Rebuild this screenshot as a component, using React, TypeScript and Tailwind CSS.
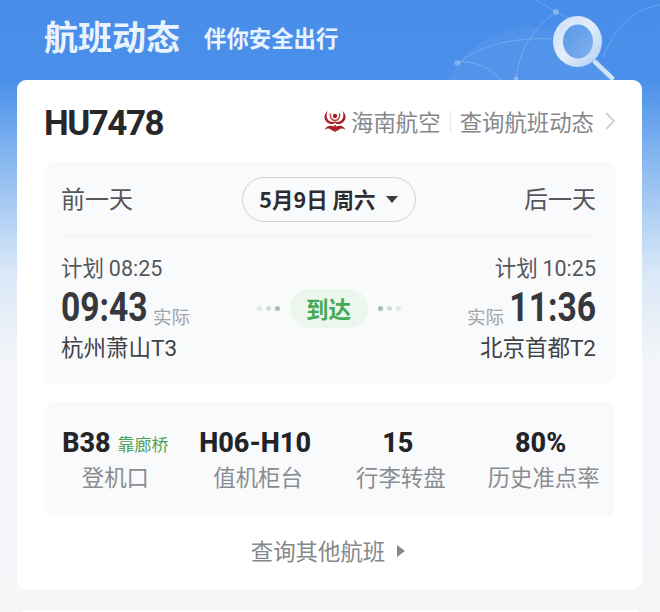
import React from "react";

const cjk = { fontFamily: '"Noto Sans CJK SC", "Noto Sans", sans-serif' };

function Logo() {
  return (
    <svg width="24" height="23" viewBox="0 0 24 23" fill="none">
      <circle cx="12" cy="6" r="2.2" fill="#a81f26" />
      <path d="M7.5 3.5 C6.5 7.5 9 10.5 12 10.5 C15 10.5 17.5 7.5 16.5 3.5" stroke="#c93a3f" strokeWidth="1.4" />
      <path d="M4.5 1 C0 5 0.5 11 6 13.5 C8.5 14.6 10.8 14 12 12.8 C13.2 14 15.5 14.6 18 13.5 C23.5 11 24 5 19.5 1 C21.5 6 20 10 16.5 11.6 C14.8 12.4 13 12 12 11.6 C11 12 9.2 12.4 7.5 11.6 C4 10 2.5 6 4.5 1Z" fill="#a81f26" />
      <path d="M12 15 L12 22" stroke="#a81f26" strokeWidth="1.6" />
      <path d="M1.5 20.5 C2.5 15.5 8 14.5 12 17 C16 14.5 21.5 15.5 22.5 20.5 C20.5 17.8 17.5 18 15.5 20 C14 21.8 12.8 21 12 19.6 C11.2 21 10 21.8 8.5 20 C6.5 18 3.5 17.8 1.5 20.5Z" fill="#a81f26" />
    </svg>
  );
}

function HeaderArt() {
  return (
    <svg className="absolute left-0 top-0" width="660" height="80" viewBox="0 0 660 80" fill="none">
      <defs>
        <linearGradient id="ring" x1="0" y1="0" x2="1" y2="1">
          <stop offset="0" stopColor="#c9dff8" />
          <stop offset="0.5" stopColor="#e3eefb" />
          <stop offset="1" stopColor="#a9cbf4" />
        </linearGradient>
        <linearGradient id="lens" x1="0" y1="0" x2="1" y2="1">
          <stop offset="0" stopColor="#5a98e6" />
          <stop offset="1" stopColor="#7fb0ee" />
        </linearGradient>
      </defs>
      <circle cx="530" cy="118" r="90" fill="#ffffff" fillOpacity="0.05" />
      <g stroke="#ffffff" strokeOpacity="0.2" strokeWidth="1">
        <path d="M457 64 C482 43 520 37 552 39" />
        <path d="M457 62 C480 60 498 72 514 96" />
        <path d="M516 80 C518 55 530 30 556 12" />
        <path d="M536 0 L556 12 L578 22" />
        <path d="M603 58 C612 32 632 8 660 5" />
      </g>
      <circle cx="457" cy="63" r="3" fill="#ffffff" fillOpacity="0.25" />
      <circle cx="556" cy="12" r="3" fill="#ffffff" fillOpacity="0.3" />
      <circle cx="516" cy="79" r="2.5" fill="#ffffff" fillOpacity="0.3" />
      <path d="M595 62 L612 78" stroke="#cfe2f8" strokeWidth="4.5" strokeLinecap="round" />
      <ellipse cx="577.5" cy="41.5" rx="24.5" ry="25.5" fill="url(#ring)" />
      <ellipse cx="578" cy="41.5" rx="15" ry="17" fill="url(#lens)" />
    </svg>
  );
}

function Dots({ reverse }: { reverse?: boolean }) {
  const o = reverse ? ["#a9bdb3", "#cfdcd6", "#e2e9e6"] : ["#e2e9e6", "#cfdcd6", "#a9bdb3"];
  return (
    <div className="flex gap-[4px]">
      {o.map((c, i) => (
        <span key={i} className="w-[5px] h-[5px] rounded-full" style={{ backgroundColor: c }} />
      ))}
    </div>
  );
}

function Stat({ value, label, extra, nudge }: { value: string; label: string; extra?: string; nudge?: boolean }) {
  return (
    <div className="flex flex-col items-center">
      <div className={`flex items-center h-[30px] whitespace-nowrap ${nudge ? "pr-[6px]" : ""}`}>
        <span className="text-[27px] font-extrabold text-[#222428] font-['Roboto'] leading-none">{value}</span>
        {extra && <span className="ml-[7px] text-[17px] text-[#4ea35c] leading-none" style={cjk}>{extra}</span>}
      </div>
      <div className="mt-[3px] text-[22.4px] leading-[30px] text-[#8a8c90] whitespace-nowrap" style={cjk}>{label}</div>
    </div>
  );
}

function BigTime({ children, right }: { children: string; right?: boolean }) {
  return (
    <span className={`flex w-[86px] text-[41px] font-bold text-[#36383c] font-['Roboto'] leading-none scale-x-[0.82] ${right ? "justify-end origin-right" : "origin-left"}`}>
      {children}
    </span>
  );
}

export default function App() {
  return (
    <div className="relative w-[660px] h-[612px] overflow-hidden bg-[linear-gradient(180deg,#488de9_0px,#4a90ea_80px,#8fbcf0_170px,#d8e7f8_270px,#f3f5f8_360px,#f5f6f8_612px)]" style={cjk}>
      <HeaderArt />
      <div className="relative h-[80px] flex items-center pl-[44px] pb-[9px]">
        <span className="text-[34px] font-bold leading-none text-[#e9f3fd]">航班动态</span>
        <span className="ml-[24px] mt-[4px] text-[22.4px] font-bold leading-none text-[#e9f3fd]">伴你安全出行</span>
      </div>

      <div className="relative mx-[17px] w-[625px] h-[510px] bg-white rounded-[9px] px-[27px]">
        <div className="h-[82px] flex items-center justify-between pt-[4px]">
          <span className="text-[35px] font-bold text-[#26282b] font-['Roboto'] tracking-[-1.5px] leading-none">HU7478</span>
          <div className="flex items-center text-[22.4px] text-[#85878b] leading-none mt-[-4px]">
            <Logo />
            <span className="ml-[4px]">海南航空</span>
            <span className="mx-[9px] w-px h-[22px] bg-[#e6e7e9]" />
            <span>查询航班动态</span>
            <svg className="ml-[10px] mr-[-1px]" width="12" height="20" viewBox="0 0 12 20" fill="none">
              <path d="M2 2 L10 10 L2 18" stroke="#c4c6c9" strokeWidth="1.6" />
            </svg>
          </div>
        </div>

        <div className="w-[572px] h-[222px] bg-[#f9fafc] rounded-[10px] pl-[17px] pr-[20px]">
          <div className="h-[75px] flex items-center justify-between border-b border-[#f0f1f3] pb-[3px]">
            <span className="text-[24px] text-[#55575b] leading-none">前一天</span>
            <div className="w-[174px] h-[45px] mt-[3px] rounded-full border border-[#cfd1d4] flex items-center justify-center gap-[10px]">
              <span className="text-[21.5px] font-bold text-[#2b2d30] leading-none whitespace-nowrap">5月9日 周六</span>
              <span className="w-0 h-0 border-x-[6px] border-x-transparent border-t-[7px] border-t-[#3a3c3f]" />
            </div>
            <span className="text-[24px] text-[#55575b] leading-none">后一天</span>
          </div>

          <div className="flex justify-between items-center pt-[15px]">
            <div className="flex flex-col items-start w-[130px]">
              <span className="text-[21.5px] leading-[30px] text-[#55575b] whitespace-nowrap">计划 <span className="font-['Roboto']">08:25</span></span>
              <div className="flex items-end h-[44px]">
                <BigTime>09:43</BigTime>
                <span className="ml-[6px] mb-[3px] text-[18.5px] text-[#a1a3a6] leading-none whitespace-nowrap">实际</span>
              </div>
              <span className="mt-[3px] text-[22.5px] leading-[30px] text-[#404246] whitespace-nowrap">杭州萧山<span className="font-['Roboto']">T3</span></span>
            </div>

            <div className="flex items-center gap-[10px] mt-[1px]">
              <Dots />
              <div className="w-[78px] h-[39px] rounded-full bg-[#ebf7ec] flex items-center justify-center text-[22.5px] font-bold text-[#45a957] leading-none">到达</div>
              <Dots reverse />
            </div>

            <div className="flex flex-col items-end w-[130px]">
              <span className="text-[21.5px] leading-[30px] text-[#55575b] whitespace-nowrap">计划 <span className="font-['Roboto']">10:25</span></span>
              <div className="flex items-end h-[44px]">
                <span className="mr-[6px] mb-[3px] text-[18.5px] text-[#a1a3a6] leading-none whitespace-nowrap">实际</span>
                <BigTime right>11:36</BigTime>
              </div>
              <span className="mt-[3px] text-[22.5px] leading-[30px] text-[#404246] whitespace-nowrap">北京首都<span className="font-['Roboto']">T2</span></span>
            </div>
          </div>
        </div>

        <div className="mt-[18px] w-[571px] h-[115px] bg-[#f9fafc] rounded-[10px] grid grid-cols-4 items-center">
          <Stat value="B38" extra="靠廊桥" label="登机口" />
          <Stat value="H06-H10" label="值机柜台" nudge />
          <Stat value="15" label="行李转盘" nudge />
          <Stat value="80%" label="历史准点率" nudge />
        </div>

        <div className="h-[67px] flex items-center justify-center gap-[12px] text-[22.4px] text-[#85878b] leading-none pr-[3px]">
          <span>查询其他航班</span>
          <span className="w-0 h-0 border-y-[6px] border-y-transparent border-l-[8px] border-l-[#85878b]" />
        </div>
      </div>

      <div className="relative mx-[17px] mt-[20px] w-[625px] h-[40px] bg-white rounded-t-[9px]" />
    </div>
  );
}
